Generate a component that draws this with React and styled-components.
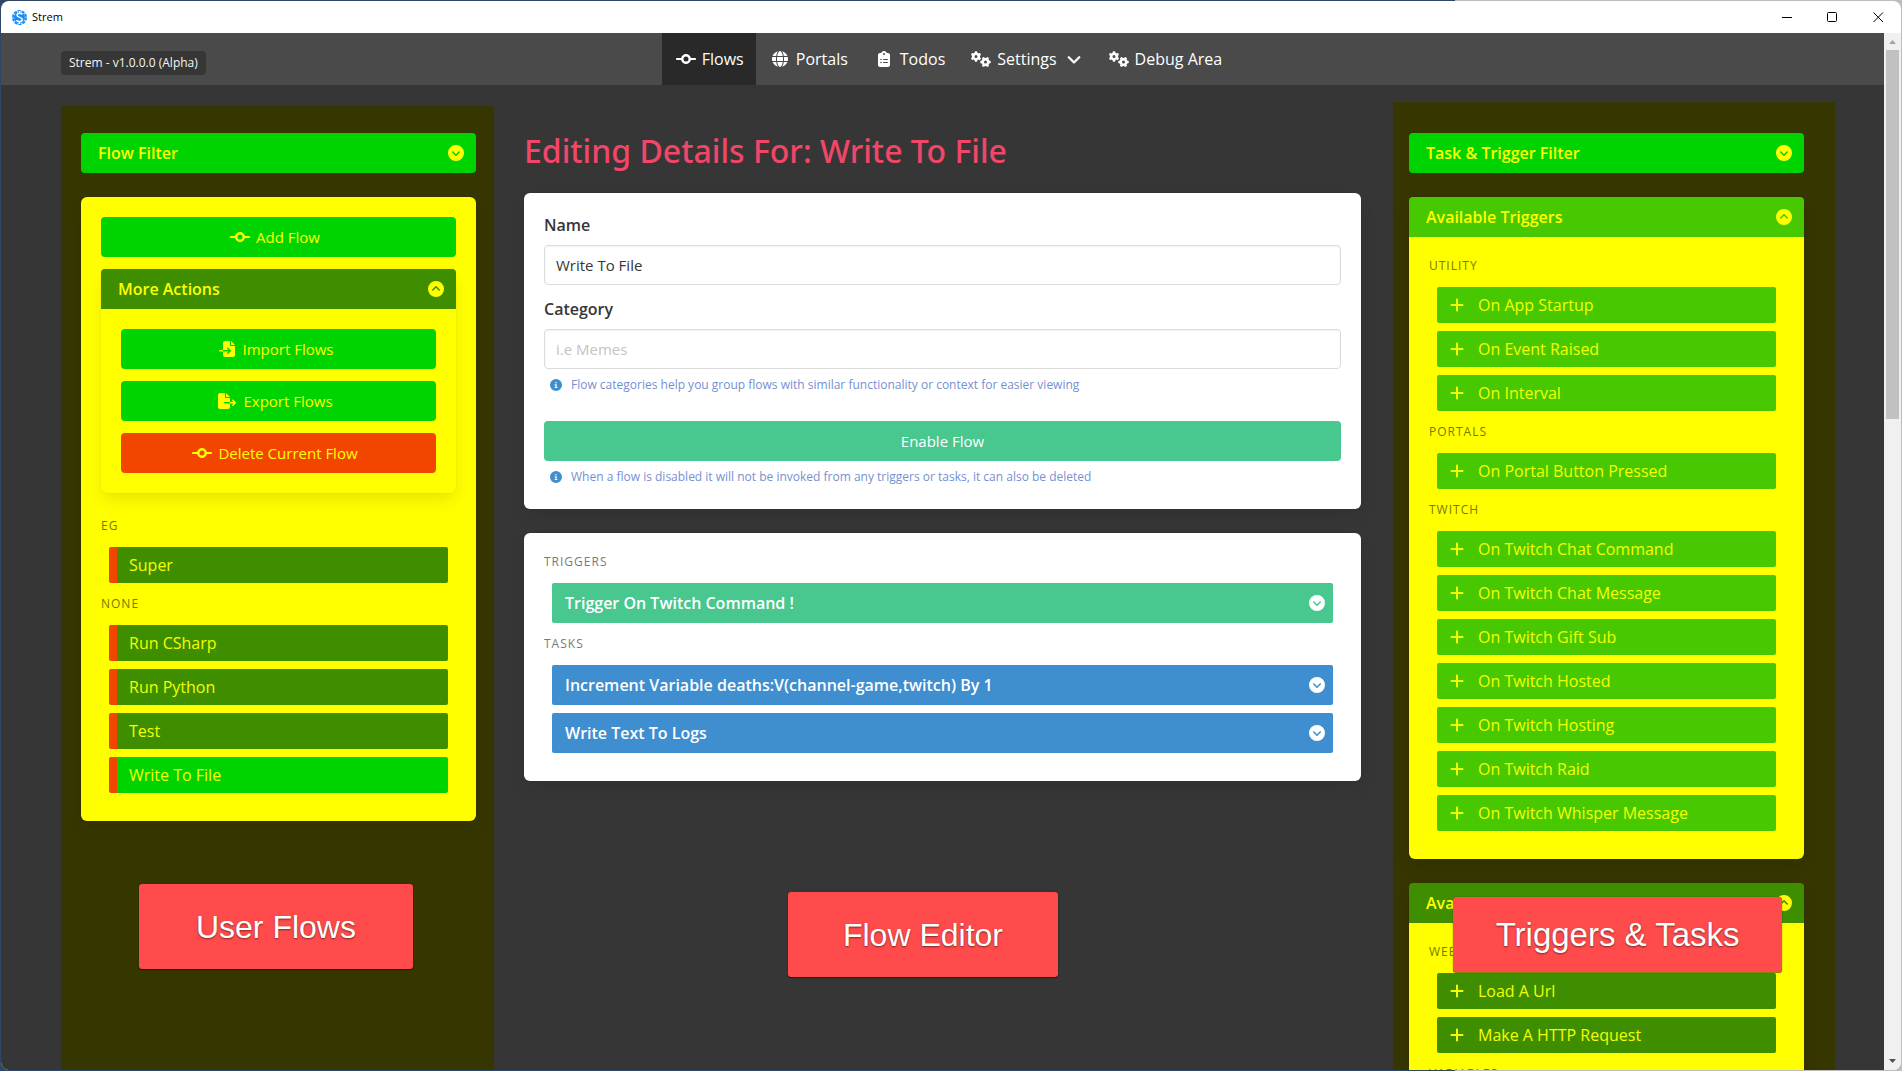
import React from "react";
import styled, { createGlobalStyle } from "styled-components";
import {
  FaChevronDown,
  FaCircleChevronDown,
  FaCircleChevronUp,
  FaCircleInfo,
  FaClipboardList,
  FaCodeCommit,
  FaFileExport,
  FaFileImport,
  FaGears,
  FaGlobe,
  FaPlus,
} from "react-icons/fa6";

const c = {
  page: "#363636",
  nav: "#4a4a4a",
  navActive: "#292929",
  tint: "#363600",
  yellow: "#ffff00",
  primary: "#00d400",
  trigger: "#48c800",
  task: "#3e8e00",
  danger: "#f24600",
  heading: "#f14668",
  success: "#48c78e",
  info: "#3e8ed0",
  badge: "#ff4b4b",
};

const shadow = "0 8px 16px -2px rgba(10, 10, 10, 0.1), 0 0 0 1px rgba(10, 10, 10, 0.02)";

const GlobalStyle = createGlobalStyle`
  *, *::before, *::after { box-sizing: border-box; }
  body {
    margin: 0;
    overflow: hidden;
    font: 400 16px/24px "Open Sans", sans-serif;
  }
  button, input { font: inherit; }
  button { border: 0; cursor: pointer; }
  h1, h2, p, ul { margin: 0; padding: 0; }
  ul { list-style: none; }
`;

/* Window frame */

const Desktop = styled.div`
  height: 100vh;
  padding: 1px;
  background: linear-gradient(90deg, #2f4665 76.5%, #bdbdbd 76.5%);
`;

const Window = styled.div`
  display: flex;
  flex-direction: column;
  height: 100%;
  overflow: hidden;
  border-radius: 8px;
  background: #fff;
`;

const TitleBar = styled.header`
  display: flex;
  flex: none;
  align-items: center;
  height: 32px;
  padding-left: 10px;
`;

const WindowTitle = styled.span`
  flex: 1;
  margin-left: 4px;
  font-size: 11px;
  line-height: 16px;
  color: #000;
`;

const WindowButton = styled.button`
  display: flex;
  align-items: center;
  justify-content: center;
  width: 46px;
  height: 32px;
  padding: 0;
  background: none;

  svg {
    fill: none;
    stroke: #000;
  }
`;

const Body = styled.div`
  display: flex;
  flex: 1;
  min-height: 0;
`;

const Viewport = styled.div`
  display: flex;
  flex: 1;
  flex-direction: column;
  min-width: 0;
  overflow: hidden;
  background: ${c.page};
`;

const ScrollTrack = styled.div`
  display: flex;
  flex: none;
  flex-direction: column;
  align-items: center;
  justify-content: space-between;
  width: 17px;
  background: #f0f0f0;
`;

const ScrollThumb = styled.div`
  flex: 0 0 35.6%;
  width: 13px;
  margin-bottom: auto;
  background: #c1c1c1;
`;

const ScrollArrow = styled.svg`
  flex: none;
  width: 17px;
  height: 17px;
  fill: ${(p) => p.$color};
`;

/* Navigation */

const NavBar = styled.nav`
  display: grid;
  flex: none;
  grid-template-columns: 1fr auto 1fr;
  height: 52px;
  padding: 0 49px 0 60px;
  background: ${c.nav};
`;

const VersionTag = styled.span`
  align-self: end;
  justify-self: start;
  margin-bottom: 10px;
  padding: 0 8px;
  border-radius: 4px;
  background: ${c.page};
  color: #f5f5f5;
  font-size: 12px;
  line-height: 24px;
`;

const NavItems = styled.div`
  display: flex;
`;

const NavLink = styled.a`
  display: flex;
  align-items: center;
  gap: 4px;
  padding: 0 12px;
  background: ${(p) => (p.$active ? c.navActive : "transparent")};
  color: #fff;
  text-decoration: none;
`;

const MenuArrow = styled(FaChevronDown)`
  width: 14px;
  height: 14px;
  margin: 0 2px 0 6px;
  stroke: currentColor;
  stroke-width: 24;
`;

const IconBox = styled.span`
  display: inline-flex;
  flex: none;
  align-items: center;
  justify-content: center;
  width: 24px;
  height: 24px;

  svg {
    flex: none;
    width: ${(p) => p.$width}px;
    height: 16px;
  }
`;

/* Columns */

const Columns = styled.main`
  display: grid;
  flex: 1;
  grid-template-columns: minmax(0, 433fr) minmax(0, 899fr) minmax(0, 442fr);
  min-height: 0;
  padding: 0 49px 0 60px;
`;

const FlowsColumn = styled.aside`
  position: relative;
  display: flex;
  flex-direction: column;
  gap: 24px;
  margin-top: 21px;
  padding: 27px 18px 0 20px;
  background: ${c.tint};
`;

const EditorColumn = styled.section`
  position: relative;
  display: flex;
  flex-direction: column;
  gap: 24px;
  padding: 48px 32px 0 30px;
`;

const LibraryColumn = styled.aside`
  position: relative;
  display: flex;
  flex-direction: column;
  gap: 24px;
  margin-top: 17px;
  padding: 31px 31px 0 16px;
  background: ${c.tint};
`;

const Badge = styled.div`
  position: absolute;
  top: ${(p) => p.$top}px;
  left: ${(p) => p.$left};
  display: flex;
  align-items: center;
  justify-content: center;
  width: ${(p) => p.$width}px;
  height: ${(p) => p.$height}px;
  border-radius: 3px;
  background: ${c.badge};
  box-shadow: 0 1px 1px rgba(0, 0, 0, 0.5), 0 0 1px rgba(0, 0, 0, 0.4);
  color: #fff;
  font: 400 ${(p) => p.$size || 32}px/40px "Liberation Sans", Arial, sans-serif;
  text-shadow: 0 1px 2px rgba(0, 0, 0, 0.5);
  white-space: nowrap;
`;

/* Panels */

const Panel = styled.div`
  flex: none;
  border-radius: 6px;
  background: ${(p) => p.$background};
  box-shadow: ${shadow};
`;

const PanelBody = styled.div`
  padding: 20px;
`;

const PanelHeader = styled.button`
  display: flex;
  flex: none;
  align-items: center;
  justify-content: space-between;
  width: 100%;
  height: 40px;
  padding: 0 12px 0 17px;
  border-radius: ${(p) => (p.$open ? "4px 4px 0 0" : "4px")};
  background: ${(p) => p.$color};
  color: ${c.yellow};
  font-weight: 600;
  text-align: left;
`;

const ActionButton = styled.button`
  display: flex;
  align-items: center;
  justify-content: center;
  gap: 4px;
  width: 100%;
  height: 40px;
  padding: 0 21px 0 12px;
  border-radius: 4px;
  background: ${(p) => p.$color};
  color: ${c.yellow};
  font-size: 15px;
`;

const Actions = styled.div`
  display: flex;
  flex-direction: column;
  gap: 12px;
`;

const Groups = styled.div`
  display: flex;
  flex-direction: column;
  gap: 12px;
  padding: ${(p) => (p.$offset ? "24px" : "0")} 0 8px;
`;

const GroupLabel = styled.h2`
  color: ${(p) => p.$color};
  font-size: 12px;
  font-weight: 400;
  line-height: 18px;
  letter-spacing: 1px;
  text-transform: uppercase;
`;

const ItemList = styled.ul`
  display: flex;
  flex-direction: column;
  gap: 8px;
  padding: 0 8px;
`;

const FlowItem = styled.button`
  display: block;
  width: 100%;
  height: 36px;
  padding: 0 12px;
  border-left: 8px solid ${c.danger};
  border-radius: 2px;
  background: ${(p) => (p.$active ? c.primary : c.task)};
  color: #f4ff00;
  text-align: left;
`;

const LibraryItem = styled.button`
  display: flex;
  align-items: center;
  gap: 13px;
  width: 100%;
  height: 36px;
  padding: 0 12px;
  border-radius: 2px;
  background: ${(p) => p.$color};
  color: #f4ff00;
  text-align: left;
`;

const StepItem = styled.button`
  display: flex;
  align-items: center;
  justify-content: space-between;
  width: 100%;
  height: 40px;
  padding: 0 8px 0 13px;
  border-radius: 2px;
  background: ${(p) => p.$color};
  color: #fff;
  font-weight: 600;
  text-align: left;

  b {
    font-weight: ${(p) => p.$strong || 600};
  }
`;

/* Editor form */

const Title = styled.h1`
  color: ${c.heading};
  font-family: "Noto Sans", sans-serif;
  font-size: 32px;
  font-weight: 500;
  line-height: 36px;
`;

const Form = styled.form`
  display: flex;
  flex-direction: column;
`;

const FieldLabel = styled.label`
  margin-bottom: 8px;
  color: #363636;
  font-weight: 600;
`;

const TextInput = styled.input`
  width: 100%;
  height: 40px;
  padding: 0 11px;
  border: 1px solid #dbdbdb;
  border-radius: 4px;
  background: #fff;
  box-shadow: inset 0 1px 2px rgba(10, 10, 10, 0.05);
  color: #363636;
  font-size: 15px;

  &::placeholder {
    color: #c4c4c4;
    opacity: 1;
  }
`;

const Field = styled.div`
  display: flex;
  flex-direction: column;
  margin-bottom: ${(p) => p.$space}px;
`;

const Help = styled.p`
  display: flex;
  align-items: center;
  gap: 9px;
  height: 28px;
  padding: 4px 0 0 6px;
  color: #7590d2;
  font-size: 12px;
  line-height: 18px;

  svg {
    flex: none;
    color: ${c.info};
  }
`;

const EnableButton = styled.button`
  width: 100%;
  height: 40px;
  border-radius: 4px;
  background: ${c.success};
  color: #fff;
  font-size: 15px;
`;

const flowGroups = [
  { name: "EG", flows: ["Super"] },
  { name: "None", flows: ["Run CSharp", "Run Python", "Test", "Write To File"] },
];

const triggerGroups = [
  { name: "Utility", items: ["On App Startup", "On Event Raised", "On Interval"] },
  { name: "Portals", items: ["On Portal Button Pressed"] },
  {
    name: "Twitch",
    items: [
      "On Twitch Chat Command",
      "On Twitch Chat Message",
      "On Twitch Gift Sub",
      "On Twitch Hosted",
      "On Twitch Hosting",
      "On Twitch Raid",
      "On Twitch Whisper Message",
    ],
  },
];

const taskGroups = [
  { name: "Web", items: ["Load A Url", "Make A HTTP Request"] },
  { name: "Variables", items: [] },
];

function Collapsible({ title, color, open }) {
  return (
    <PanelHeader type="button" aria-expanded={!!open} $color={color} $open={open}>
      {title}
      {open ? <FaCircleChevronUp /> : <FaCircleChevronDown />}
    </PanelHeader>
  );
}

function Action({ icon: Icon, width, color, children }) {
  return (
    <ActionButton type="button" $color={color}>
      <IconBox $width={width}>
        <Icon />
      </IconBox>
      {children}
    </ActionButton>
  );
}

function NavItem({ icon: Icon, width, active, menu, children }) {
  return (
    <NavLink href="#" $active={active} aria-current={active ? "page" : undefined}>
      <IconBox $width={width}>
        <Icon />
      </IconBox>
      {children}
      {menu && <MenuArrow />}
    </NavLink>
  );
}

function Library({ title, color, groups }) {
  return (
    <Panel $background={c.yellow}>
      <Collapsible title={title} color={color} open />
      <PanelBody>
        <Groups>
          {groups.map((group) => (
            <React.Fragment key={group.name}>
              <GroupLabel $color="#7a7a00">{group.name}</GroupLabel>
              <ItemList>
                {group.items.map((item) => (
                  <li key={item}>
                    <LibraryItem type="button" $color={color}>
                      <FaPlus />
                      {item}
                    </LibraryItem>
                  </li>
                ))}
              </ItemList>
            </React.Fragment>
          ))}
        </Groups>
      </PanelBody>
    </Panel>
  );
}

function Logo() {
  return (
    <svg width="17" height="17" viewBox="0 0 17 17" aria-hidden="true">
      <circle cx="8.5" cy="8.5" r="6.5" fill="none" stroke="#1788f5" strokeWidth="2" strokeDasharray="3 1" />
      <circle cx="8.5" cy="8.5" r="5.5" fill="#1788f5" />
      <path
        d="M11.5 5.5C10 3.8 6 4 6 6.3c0 2.5 5.4 1.7 5.4 4.3 0 2.4-4.2 2.6-6 .8M8.5 2v3M8.5 12v3"
        fill="none"
        stroke="#fff"
        strokeWidth="1.5"
      />
    </svg>
  );
}

export default function App() {
  return (
    <>
      <GlobalStyle />
      <Desktop>
        <Window>
          <TitleBar>
            <Logo />
            <WindowTitle>Strem</WindowTitle>
            <WindowButton type="button" aria-label="Minimize">
              <svg width="11" height="11">
                <path d="M1 5.5h10" />
              </svg>
            </WindowButton>
            <WindowButton type="button" aria-label="Maximize">
              <svg width="11" height="11">
                <rect x="0.5" y="0.5" width="9" height="9" rx="1" />
              </svg>
            </WindowButton>
            <WindowButton type="button" aria-label="Close">
              <svg width="11" height="11">
                <path d="M0.5 0.5l9.500 9.500M10 0.5l-9.500 9.500" />
              </svg>
            </WindowButton>
          </TitleBar>

          <Body>
            <Viewport>
              <NavBar>
                <VersionTag>Strem - v1.0.0.0 (Alpha)</VersionTag>
                <NavItems>
                  <NavItem icon={FaCodeCommit} width={20} active>Flows</NavItem>
                  <NavItem icon={FaGlobe} width={16}>Portals</NavItem>
                  <NavItem icon={FaClipboardList} width={12}>Todos</NavItem>
                  <NavItem icon={FaGears} width={20} menu>Settings</NavItem>
                  <NavItem icon={FaGears} width={20}>Debug Area</NavItem>
                </NavItems>
              </NavBar>

              <Columns>
                <FlowsColumn>
                  <Collapsible title="Flow Filter" color={c.primary} />
                  <Panel $background={c.yellow}>
                    <PanelBody>
                      <Actions>
                        <Action icon={FaCodeCommit} width={20} color={c.primary}>Add Flow</Action>
                        <Panel $background={c.yellow}>
                          <Collapsible title="More Actions" color={c.task} open />
                          <PanelBody>
                            <Actions>
                              <Action icon={FaFileImport} width={16} color={c.primary}>Import Flows</Action>
                              <Action icon={FaFileExport} width={18} color={c.primary}>Export Flows</Action>
                              <Action icon={FaCodeCommit} width={20} color={c.danger}>Delete Current Flow</Action>
                            </Actions>
                          </PanelBody>
                        </Panel>
                      </Actions>
                      <Groups $offset>
                        {flowGroups.map((group) => (
                          <React.Fragment key={group.name}>
                            <GroupLabel $color="#7a7a00">{group.name}</GroupLabel>
                            <ItemList>
                              {group.flows.map((flow) => (
                                <li key={flow}>
                                  <FlowItem type="button" $active={flow === "Write To File"}>
                                    {flow}
                                  </FlowItem>
                                </li>
                              ))}
                            </ItemList>
                          </React.Fragment>
                        ))}
                      </Groups>
                    </PanelBody>
                  </Panel>
                  <Badge $top={778} $left="18%" $width={274} $height={85}>User Flows</Badge>
                </FlowsColumn>

                <EditorColumn>
                  <Title>Editing Details For: Write To File</Title>
                  <Panel $background="#fff">
                    <PanelBody>
                      <Form>
                        <Field $space={12}>
                          <FieldLabel htmlFor="flow-name">Name</FieldLabel>
                          <TextInput id="flow-name" defaultValue="Write To File" />
                        </Field>
                        <Field $space={24}>
                          <FieldLabel htmlFor="flow-category">Category</FieldLabel>
                          <TextInput id="flow-category" placeholder="i.e Memes" />
                          <Help>
                            <FaCircleInfo />
                            Flow categories help you group flows with similar functionality or context for easier viewing
                          </Help>
                        </Field>
                        <EnableButton type="button">Enable Flow</EnableButton>
                        <Help>
                          <FaCircleInfo />
                          When a flow is disabled it will not be invoked from any triggers or tasks, it can also be deleted
                        </Help>
                      </Form>
                    </PanelBody>
                  </Panel>

                  <Panel $background="#fff">
                    <PanelBody>
                      <Groups>
                        <GroupLabel $color="#7a7a7a">Triggers</GroupLabel>
                        <ItemList>
                          <li>
                            <StepItem type="button" $color={c.success}>
                              <span>Trigger On Twitch Command <b>!</b></span>
                              <FaCircleChevronDown />
                            </StepItem>
                          </li>
                        </ItemList>
                        <GroupLabel $color="#7a7a7a">Tasks</GroupLabel>
                        <ItemList>
                          <li>
                            <StepItem type="button" $color={c.info}>
                              <span>Increment Variable <b>deaths:V(channel-game,twitch)</b> By <b>1</b></span>
                              <FaCircleChevronDown />
                            </StepItem>
                          </li>
                          <li>
                            <StepItem type="button" $color={c.info}>
                              <span>Write Text To Logs</span>
                              <FaCircleChevronDown />
                            </StepItem>
                          </li>
                        </ItemList>
                      </Groups>
                    </PanelBody>
                  </Panel>
                  <Badge $top={807} $left="32.7%" $width={270} $height={85}>Flow Editor</Badge>
                </EditorColumn>

                <LibraryColumn>
                  <Collapsible title="Task & Trigger Filter" color={c.primary} />
                  <Library title="Available Triggers" color={c.trigger} groups={triggerGroups} />
                  <Library title="Available Tasks" color={c.task} groups={taskGroups} />
                  <Badge $top={795} $left="13.6%" $width={329} $height={75} $size={33}>
                    {"Triggers & Tasks"}
                  </Badge>
                </LibraryColumn>
              </Columns>
            </Viewport>

            <ScrollTrack aria-hidden="true">
              <ScrollArrow $color="#a3a3a3" viewBox="0 0 17 17">
                <path d="M5 11l3.5-4 3.5 4z" />
              </ScrollArrow>
              <ScrollThumb />
              <ScrollArrow $color="#505050" viewBox="0 0 17 17">
                <path d="M5 6l3.5 4 3.5-4z" />
              </ScrollArrow>
            </ScrollTrack>
          </Body>
        </Window>
      </Desktop>
    </>
  );
}
